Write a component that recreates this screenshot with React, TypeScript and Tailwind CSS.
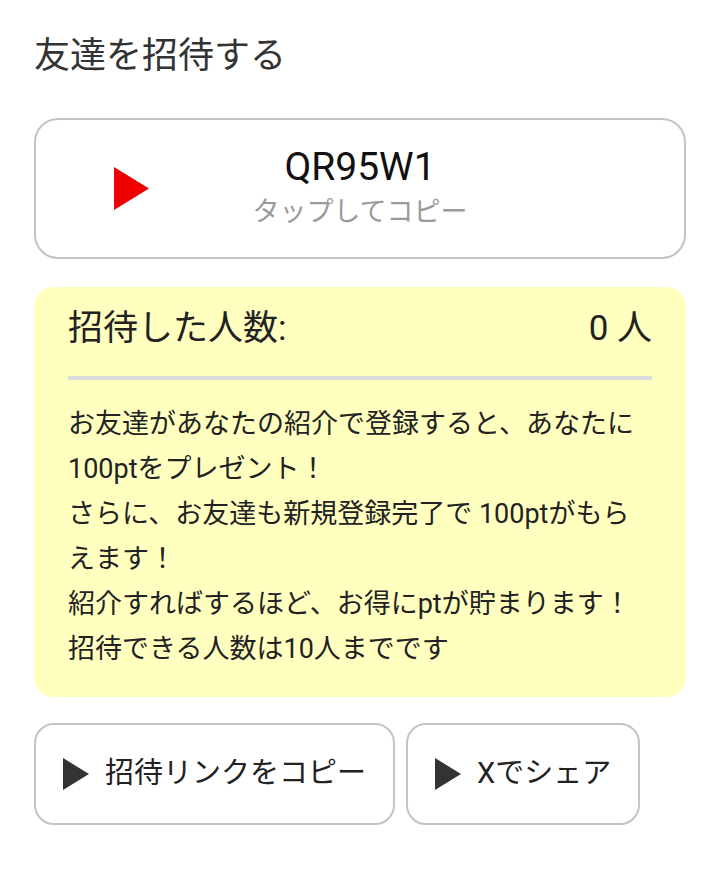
import React from "react";

const font = { fontFamily: "Roboto, 'Noto Sans CJK JP', sans-serif" };

function Triangle({ className }: { className?: string }) {
  return (
    <svg viewBox="0 0 26 32" className={className} aria-hidden>
      <polygon points="0,0 26,16 0,32" fill="currentColor" />
    </svg>
  );
}

function ActionButton({ label }: { label: string }) {
  return (
    <button className="h-[102px] rounded-[20px] border-2 border-[#c4c4c4] bg-white px-[27px] flex items-center gap-4 text-[29px] text-[#222]">
      <Triangle className="w-[26px] h-[32px] text-[#333]" />
      <span>{label}</span>
    </button>
  );
}

export default function App() {
  return (
    <div className="min-h-screen bg-white px-[34px] pt-8" style={font}>
      {/* Title */}
      <h1 className="text-[36px] leading-[48px] text-[#333] mb-[38px]">友達を招待する</h1>

      {/* Invite code */}
      <div className="h-[141px] rounded-[24px] border-2 border-[#c4c4c4] grid grid-cols-[1fr_auto_1fr] items-center">
        <div className="pl-[78px]">
          <Triangle className="w-[35px] h-[45px] text-[#ee0000]" />
        </div>
        <div className="flex flex-col items-center">
          <span className="text-[39px] leading-[46px] text-[#111]">QR95W1</span>
          <span className="text-[27px] leading-[44px] text-[#9a9a9a]">タップしてコピー</span>
        </div>
        <div />
      </div>

      {/* Invite count */}
      <div className="mt-[28px] rounded-[20px] bg-[#ffffc0] px-[34px] pt-[20px] pb-[25px] text-[#222]">
        <div className="flex justify-between text-[35px] leading-[44px]">
          <span>招待した人数:</span>
          <span>0 人</span>
        </div>
        <div className="mt-[25px] h-[4px] bg-[#dddddd]" />
        <div className="mt-[22px] text-[27px] leading-[45px]">
          <p>
            お友達があなたの紹介で登録すると、あなたに
            <br />
            100ptをプレゼント！
          </p>
          <p>
            さらに、お友達も新規登録完了で 100ptがもら
            <br />
            えます！
          </p>
          <p>紹介すればするほど、お得にptが貯まります！</p>
          <p>招待できる人数は10人までです</p>
        </div>
      </div>

      {/* Actions */}
      <div className="mt-[26px] flex gap-[11px]">
        <ActionButton label="招待リンクをコピー" />
        <ActionButton label="Xでシェア" />
      </div>
    </div>
  );
}
